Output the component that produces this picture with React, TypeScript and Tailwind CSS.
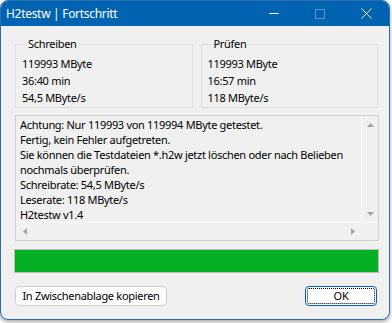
const font = { fontFamily: '"Noto Sans", "Liberation Sans", sans-serif' };

const writeValues = ["119993 MByte", "36:40 min", "54,5 MByte/s"];
const checkValues = ["119993 MByte", "16:57 min", "118 MByte/s"];

const logLines = [
  "Achtung: Nur 119993 von 119994 MByte getestet.",
  "Fertig, kein Fehler aufgetreten.",
  "Sie können die Testdateien *.h2w jetzt löschen oder nach Belieben",
  "nochmals überprüfen.",
  "Schreibrate: 54,5 MByte/s",
  "Leserate: 118 MByte/s",
  "H2testw v1.4",
];

const GroupBox = ({ title, values }: { title: string; values: string[] }) => {
  return (
    <fieldset className="w-[178px] h-[70px] border border-[#dcdcdc] px-[6px]">
      <legend className="ml-[4px] px-[2px] text-[11px] leading-[12px]">{title}</legend>
      <div className="pt-[5px]">
        {values.map((v, i) => (
          <div key={i} className="text-[11px] leading-[17px] h-[17px] whitespace-nowrap">
            {v}
          </div>
        ))}
      </div>
    </fieldset>
  );
};

const Arrow = ({ dir }: { dir: "up" | "down" | "left" | "right" }) => {
  const pts: Record<string, string> = {
    up: "0,4 3.5,0 7,4",
    down: "0,0 3.5,4 7,0",
    left: "4,0 0,3.5 4,7",
    right: "0,0 4,3.5 0,7",
  };
  const vertical = dir === "up" || dir === "down";
  return (
    <svg width={vertical ? 7 : 4} height={vertical ? 4 : 7} viewBox={vertical ? "0 0 7 4" : "0 0 4 7"}>
      <polygon points={pts[dir]} fill="#a3a3a3" />
    </svg>
  );
};

const App = () => {
  return (
    <div className="w-[392px] h-[323px] bg-white text-[#000] tracking-[-0.3px]" style={font}>
      <div className="w-[390px] h-[320px] rounded-[8px] border border-[#2b6cb0] bg-[#f0f0f0] overflow-hidden flex flex-col shadow-[0_2px_4px_rgba(0,0,0,0.35)]">
        {/* title bar */}
        <div className="h-[25px] bg-[#0063b1] flex items-center text-white shrink-0">
          <span className="pl-[5px] text-[12px] leading-[12px]">H2testw | Fortschritt</span>
          <div className="ml-auto flex h-full">
            <div className="w-[46px] flex items-center justify-center">
              <div className="w-[10px] h-[1px] bg-white" />
            </div>
            <div className="w-[46px] flex items-center justify-center">
              <div className="w-[10px] h-[10px] border border-[#5f93cb]" />
            </div>
            <div className="w-[46px] flex items-center justify-center">
              <svg width="11" height="11" viewBox="0 0 11 11">
                <path d="M0.5 0.5 L10.5 10.5 M10.5 0.5 L0.5 10.5" stroke="white" strokeWidth="1" />
              </svg>
            </div>
          </div>
        </div>

        <div className="flex flex-col pl-[13px] pr-[11px] pt-[12px]">
          {/* group boxes */}
          <div className="flex gap-[8px] pl-[1px]">
            <GroupBox title="Schreiben" values={writeValues} />
            <GroupBox title="Prüfen" values={checkValues} />
          </div>

          {/* log text area */}
          <div className="mt-[7px] ml-[1px] w-[364px] h-[126px] border border-[#d0d0d0] flex flex-col">
            <div className="flex flex-1 min-h-0">
              <div className="flex-1 pl-[4px] pt-[1px] overflow-hidden whitespace-nowrap">
                {logLines.map((l, i) => (
                  <div key={i} className="text-[11px] leading-[15px] h-[15px]">
                    {l}
                  </div>
                ))}
              </div>
              <div className="w-[17px] flex flex-col justify-between border-l border-[#fafafa]">
                <div className="h-[17px] flex items-center justify-center">
                  <Arrow dir="up" />
                </div>
                <div className="h-[17px] flex items-center justify-center">
                  <Arrow dir="down" />
                </div>
              </div>
            </div>
            <div className="h-[18px] flex border-t border-[#fafafa]">
              <div className="flex-1 flex justify-between">
                <div className="w-[17px] flex items-center justify-center">
                  <Arrow dir="left" />
                </div>
                <div className="w-[17px] flex items-center justify-center">
                  <Arrow dir="right" />
                </div>
              </div>
              <div className="w-[17px]" />
            </div>
          </div>

          {/* progress */}
          <div className="mt-[8px] w-[365px] h-[24px] border border-[#bcbcbc] bg-[#06b025]" />

          {/* buttons */}
          <div className="mt-[13px] flex justify-between pl-[1px] pr-[1px]">
            <button className="w-[152px] h-[20px] rounded-[4px] border border-[#d0d0d0] bg-[#fdfdfd] text-[11px] leading-[12px] whitespace-nowrap">
              In Zwischenablage kopieren
            </button>
            <button className="w-[72px] h-[20px] rounded-[4px] border border-[#005fb8] bg-[#fdfdfd] p-[1px]">
              <div className="w-full h-full border border-dotted border-black rounded-[2px] flex items-center justify-center text-[11px] leading-[12px]">
                OK
              </div>
            </button>
          </div>
        </div>
      </div>
    </div>
  );
};

export default App;
